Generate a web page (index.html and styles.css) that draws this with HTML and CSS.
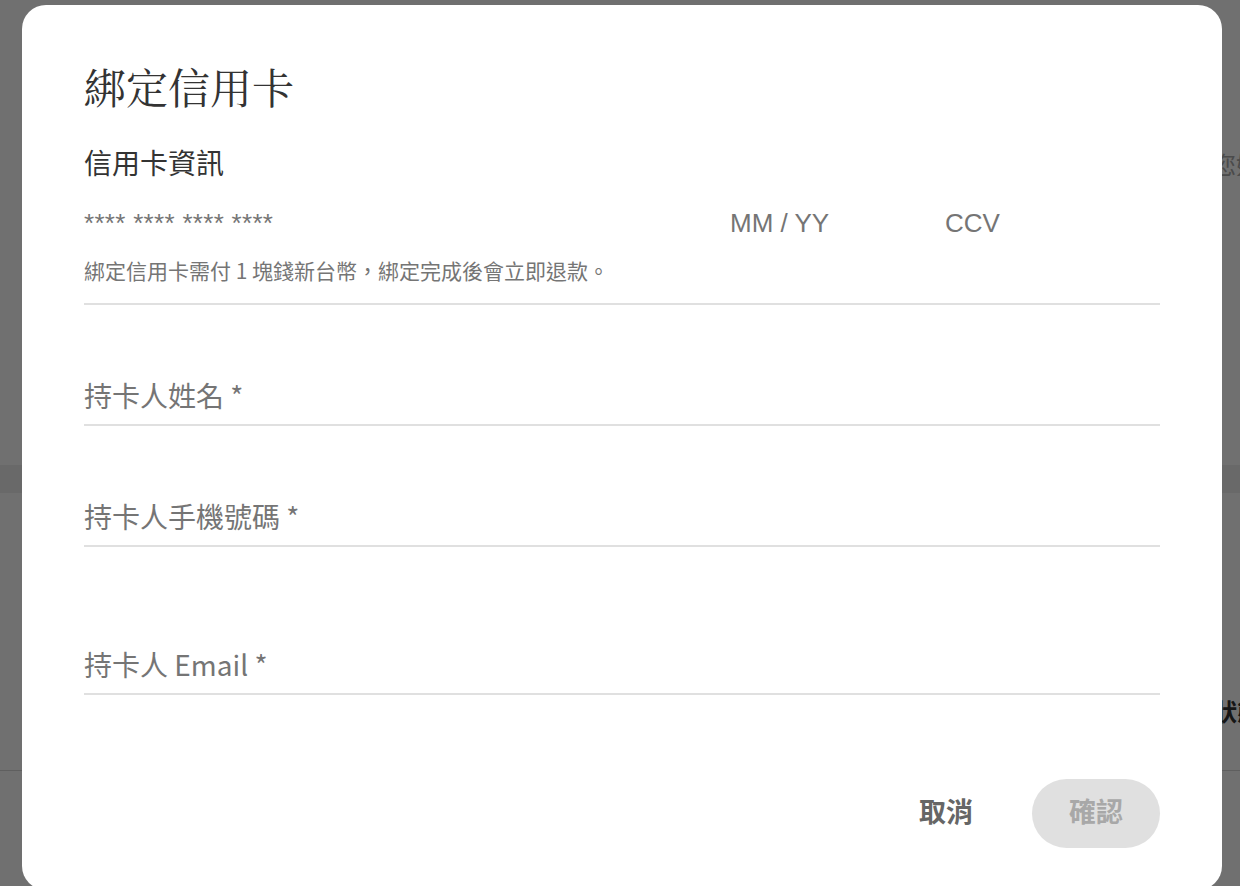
FILE: index.html
```html
<!DOCTYPE html>
<html lang="zh-Hant">
<head>
<meta charset="utf-8">
<title>綁定信用卡</title>
<link rel="stylesheet" href="styles.css">
</head>
<body>
<div class="page">
  <div class="page-row page-row-top"><span class="page-note">您好</span></div>
  <div class="page-band"></div>
  <div class="page-row page-row-status"><span class="page-status">狀態</span></div>
  <div class="page-rule"></div>
</div>

<div class="overlay">
  <div class="modal" role="dialog" aria-labelledby="modal-title">
    <h1 class="modal-title" id="modal-title">綁定信用卡</h1>
    <h2 class="section-title">信用卡資訊</h2>

    <div class="card-block">
      <div class="card-row">
        <div class="card-field card-number">**** **** **** ****</div>
        <div class="card-field card-expiry">MM / YY</div>
        <div class="card-field card-ccv">CCV</div>
      </div>
      <p class="card-hint">綁定信用卡需付 1 塊錢新台幣，綁定完成後會立即退款。</p>
    </div>

    <div class="field field-name"><span class="field-label">持卡人姓名 *</span></div>
    <div class="field field-phone"><span class="field-label">持卡人手機號碼 *</span></div>
    <div class="field field-email"><span class="field-label">持卡人 Email *</span></div>

    <div class="actions">
      <button class="btn btn-cancel" type="button">取消</button>
      <button class="btn btn-confirm" type="button" disabled>確認</button>
    </div>
  </div>
</div>
</body>
</html>
```

FILE: styles.css
```css
html, body {
  margin: 0;
  padding: 0;
  height: 100%;
  overflow: hidden;
}

body {
  background: #ffffff;
  font-family: "Noto Sans CJK TC", "Noto Sans", sans-serif;
  color: #333333;
}

/* ---------- background page (under the overlay) ---------- */
.page {
  display: flex;
  flex-direction: column;
  width: 1240px;
}

.page-row {
  padding-left: 1212px;
  white-space: nowrap;
  overflow: hidden;
}

.page-row-top {
  margin-top: 152px;
  height: 24px;
}

.page-note {
  font-size: 24px;
  line-height: 24px;
  color: #aaaaaa;
}

.page-band {
  margin-top: 289px;
  height: 28px;
  background: #f0f0f0;
}

.page-row-status {
  margin-top: 205px;
  height: 26px;
  padding-left: 1213px;
}

.page-status {
  font-size: 24px;
  line-height: 26px;
  font-weight: 700;
  color: #333333;
}

.page-rule {
  margin-top: 46px;
  height: 1px;
  background: #d8d8d8;
}

/* ---------- overlay + modal ---------- */
.overlay {
  position: fixed;
  inset: 0;
  background: rgba(0, 0, 0, 0.56);
  display: flex;
  align-items: flex-start;
  padding: 5px 0 0 22px;
}

.modal {
  box-sizing: border-box;
  width: 1200px;
  background: #ffffff;
  border-radius: 24px;
  padding: 59px 62px 42px 62px;
  display: flex;
  flex-direction: column;
}

.modal-title {
  margin: 0;
  font-family: "Noto Serif CJK TC", "Noto Serif CJK SC", serif;
  font-weight: 400;
  font-size: 42px;
  line-height: 44px;
  color: #333333;
}

.section-title {
  margin: 40px 0 0 0;
  font-weight: 400;
  font-size: 28px;
  line-height: 28px;
  color: #333333;
}

.card-block {
  margin-top: 32px;
  border-bottom: 2px solid #e0e0e0;
  padding-bottom: 22px;
}

.card-row {
  display: flex;
  font-family: "Liberation Sans", Arial, sans-serif;
  font-size: 26px;
  line-height: 30px;
  color: #757575;
}

.card-number {
  flex: 1;
  letter-spacing: 0.3px;
}

.card-expiry,
.card-ccv {
  width: 215px;
}

.card-hint {
  margin: 21px 0 0 0;
  font-size: 21px;
  line-height: 22px;
  color: #757575;
}

.field {
  border-bottom: 2px solid #e0e0e0;
  padding-bottom: 15px;
}

.field-name {
  margin-top: 76px;
}

.field-phone {
  margin-top: 76px;
}

.field-email {
  margin-top: 103px;
}

.field-label {
  display: block;
  font-size: 28px;
  line-height: 28px;
  color: #757575;
}

.actions {
  margin-top: 84px;
  display: flex;
  justify-content: flex-end;
  gap: 22px;
}

.btn {
  box-sizing: border-box;
  min-width: 128px;
  height: 69px;
  border: none;
  border-radius: 35px;
  font-family: "Noto Sans CJK TC", "Noto Sans", sans-serif;
  font-size: 27px;
  font-weight: 700;
  padding: 0 24px 6px 24px;
  cursor: pointer;
}

.btn-cancel {
  background: transparent;
  color: #666666;
}

.btn-confirm {
  background: #e0e0e0;
  color: #a8a8a8;
  cursor: default;
}
```
